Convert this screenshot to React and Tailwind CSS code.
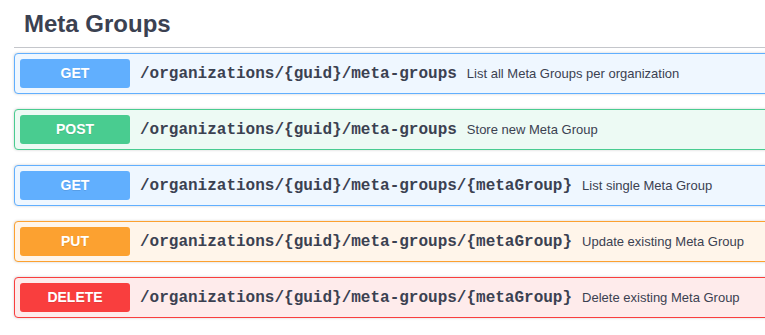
const endpoints = [
  {
    method: 'GET',
    path: '/organizations/{guid}/meta-groups',
    summary: 'List all Meta Groups per organization',
    block: 'bg-[#eff7ff] border-[#61affe]',
    badge: 'bg-[#61affe]'
  },
  {
    method: 'POST',
    path: '/organizations/{guid}/meta-groups',
    summary: 'Store new Meta Group',
    block: 'bg-[#edfaf4] border-[#49cc90]',
    badge: 'bg-[#49cc90]'
  },
  {
    method: 'GET',
    path: '/organizations/{guid}/meta-groups/{metaGroup}',
    summary: 'List single Meta Group',
    block: 'bg-[#eff7ff] border-[#61affe]',
    badge: 'bg-[#61affe]'
  },
  {
    method: 'PUT',
    path: '/organizations/{guid}/meta-groups/{metaGroup}',
    summary: 'Update existing Meta Group',
    block: 'bg-[#fff5ea] border-[#fca130]',
    badge: 'bg-[#fca130]'
  },
  {
    method: 'DELETE',
    path: '/organizations/{guid}/meta-groups/{metaGroup}',
    summary: 'Delete existing Meta Group',
    block: 'bg-[#feebeb] border-[#f93e3e]',
    badge: 'bg-[#f93e3e]'
  }
];

const App = () => {
  return (
    <div className="w-[765px] h-[335px] overflow-hidden bg-white text-[#3b4151] font-['Liberation_Sans',Arial,sans-serif]">
      <div className="w-[820px] pl-[14px]">
        {/* Tag header */}
        <div className="pl-[10px] pt-[9px] pb-[8px] mb-[5px] border-b border-[#c4c6cb]">
          <h2 className="text-[24px] leading-[30px] font-bold">Meta Groups</h2>
        </div>

        {/* Operations */}
        <div>
          {endpoints.map((ep, i) => (
            <div
              key={i}
              className={`mb-[15px] border rounded-[4px] shadow-[0_0_3px_rgba(0,0,0,0.19)] ${ep.block}`}
            >
              <div className="flex items-center p-[5px]">
                <span
                  className={`w-[110px] h-[29px] flex items-center justify-center rounded-[3px] text-white text-[14px] font-bold [text-shadow:0_1px_0_rgba(0,0,0,0.1)] ${ep.badge}`}
                >
                  {ep.method}
                </span>
                <span className="px-[10px] text-[16px] font-bold font-['Liberation_Mono','Courier_New',monospace] whitespace-nowrap">
                  {ep.path}
                </span>
                <span className="text-[13px] whitespace-nowrap">{ep.summary}</span>
              </div>
            </div>
          ))}
        </div>
      </div>
    </div>
  );
};

export default App;
